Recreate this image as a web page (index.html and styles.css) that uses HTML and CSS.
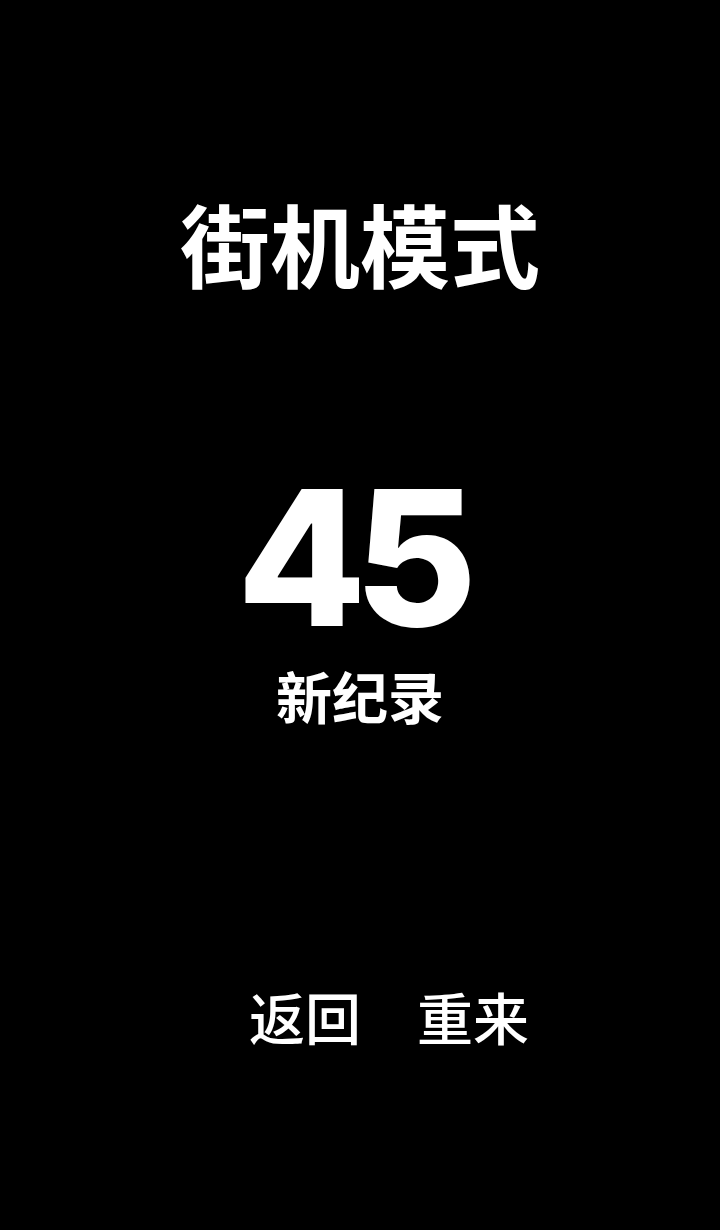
FILE: index.html
```html
<!DOCTYPE html>
<html lang="zh">
<head>
<meta charset="utf-8">
<title>街机模式</title>
<link rel="stylesheet" href="styles.css">
</head>
<body>
<main class="screen">
  <h1 class="title">街机模式</h1>
  <div class="result">
    <div class="score">45</div>
    <div class="record">新纪录</div>
  </div>
  <nav class="actions">
    <button class="action">返回</button>
    <button class="action">重来</button>
  </nav>
</main>
</body>
</html>
```

FILE: styles.css
```css
html, body {
  margin: 0;
  padding: 0;
  background: #000;
}

.screen {
  width: 720px;
  height: 1230px;
  display: flex;
  flex-direction: column;
  align-items: center;
  color: #fff;
  font-family: "Noto Sans CJK SC", "Noto Sans", sans-serif;
}

.title {
  margin: 182px 0 0;
  font-size: 90px;
  font-weight: 700;
  line-height: 120px;
}

.result {
  margin-top: 176px;
  display: flex;
  flex-direction: column;
  align-items: center;
}

/* tightened digits; right padding offsets the trailing letter-spacing */
.score {
  font-family: "Inter", "Open Sans", sans-serif;
  font-size: 188px;
  font-weight: 800;
  letter-spacing: -12px;
  padding-right: 18px;
  line-height: 160px;
  height: 160px;
  margin-bottom: 22px;
}

.record {
  font-size: 56px;
  font-weight: 700;
  line-height: 70px;
}

.actions {
  margin-top: 251px;
  display: flex;
  gap: 56px;
  padding-left: 58px;
}

.action {
  background: none;
  border: 0;
  padding: 0;
  color: #fff;
  font-family: "Noto Sans CJK SC", sans-serif;
  font-size: 56px;
  font-weight: 500;
  line-height: 70px;
}
```
